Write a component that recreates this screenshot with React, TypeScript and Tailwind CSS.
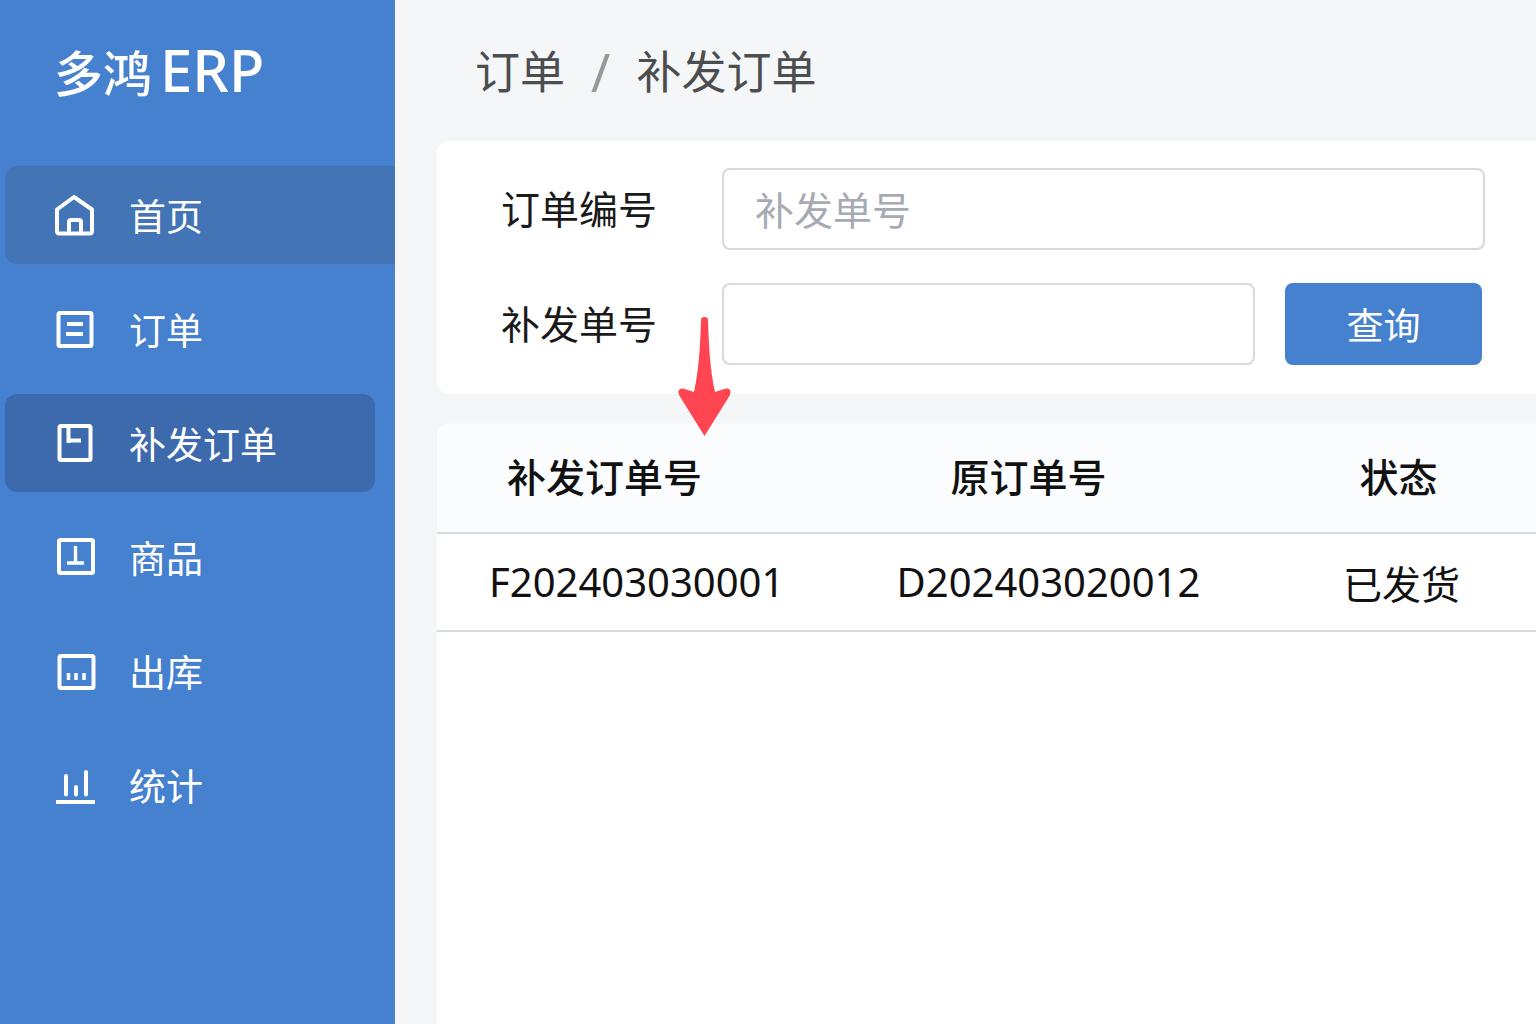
import React, { FC, ReactNode } from "react";

type NavItem = {
  label: string;
  icon: ReactNode;
  state?: "hover" | "active";
};

const Frame: FC<{ children?: ReactNode }> = ({ children }) => (
  <svg
    width="40"
    height="40"
    viewBox="0 0 40 40"
    fill="none"
    stroke="currentColor"
    strokeWidth="4"
    className="overflow-visible"
    aria-hidden="true"
  >
    {children}
  </svg>
);

const navItems: NavItem[] = [
  {
    label: "首页",
    state: "hover",
    icon: (
      <Frame>
        <path
          d="M3 14.500L20 2L38 14.500V36Q38 38.500 35.500 38.500H5.500Q3 38.500 3 36Z"
          strokeLinejoin="round"
        />
        <path d="M15 38V27Q15 25 17 25H25Q27 25 27 27V38" />
      </Frame>
    ),
  },
  {
    label: "订单",
    icon: (
      <Frame>
        <rect x="4.500" y="4" width="33" height="33" rx="1.500" />
        <path d="M13 15H29M12 25H29" />
      </Frame>
    ),
  },
  {
    label: "补发订单",
    state: "active",
    icon: (
      <Frame>
        <rect x="5.500" y="3" width="31" height="34" rx="1.500" />
        <path d="M14.500 3V20M13 17.500H27" />
      </Frame>
    ),
  },
  {
    label: "商品",
    icon: (
      <Frame>
        <rect x="5" y="3" width="34" height="33" rx="1.500" />
        <path d="M21.500 9V26M13 26H30" strokeWidth="3.400" />
      </Frame>
    ),
  },
  {
    label: "出库",
    icon: (
      <Frame>
        <rect x="5.500" y="5" width="34" height="32" rx="1.500" />
        <path d="M14.500 22V29M22 22V29M30 22V29" strokeWidth="3.500" />
      </Frame>
    ),
  },
  {
    label: "统计",
    icon: (
      <Frame>
        <path d="M2 37H41" />
        <path
          d="M12 11V29.500M22 22V29.500M32 7V29.500"
          strokeWidth="4"
          strokeLinecap="round"
        />
      </Frame>
    ),
  },
];

const stateClass = {
  hover: "rounded-l-xl bg-[#4274b6]",
  active: "mr-5 rounded-xl bg-[#3c6aad]",
};

const orders = [
  { reissueNo: "F202403030001", originNo: "D202403020012", status: "已发货" },
];

const Sidebar: FC = () => (
  <aside className="w-[395px] shrink-0 bg-[#4581ce] text-white">
    <div className="h-[166px] pl-[54px] pt-[30px] text-[49px] leading-[80px] font-medium">
      多鸿<span className="ml-2 text-[58px]">ERP</span>
    </div>
    <nav className="flex flex-col gap-4 pl-[5px]">
      {navItems.map((item) => (
        <a
          key={item.label}
          href="#"
          className={`flex h-[98px] items-center gap-[35px] pl-[49px] text-[37px] ${
            item.state ? stateClass[item.state] : ""
          }`}
        >
          {item.icon}
          <span className="pt-1">{item.label}</span>
        </a>
      ))}
    </nav>
  </aside>
);

const SearchForm: FC = () => (
  <form
    className="flex flex-col gap-[33px] rounded-l-xl bg-white pt-[27px] pr-[51px] pb-[29px] pl-16 text-[39px] text-[#1a1a1a]"
    onSubmit={(e) => e.preventDefault()}
  >
    <div className="flex items-center">
      <label htmlFor="orderNo" className="w-[221px] shrink-0">
        订单编号
      </label>
      <input
        id="orderNo"
        type="text"
        placeholder="补发单号"
        className="h-[82px] min-w-0 flex-1 rounded-lg border-2 border-[#d6dadd] bg-white px-[31px] placeholder:text-[#a6abb3]"
      />
    </div>
    <div className="flex items-center pr-[3px]">
      <label htmlFor="reissueNo" className="w-[221px] shrink-0">
        补发单号
      </label>
      <input
        id="reissueNo"
        type="text"
        className="h-[82px] min-w-0 flex-1 rounded-lg border-2 border-[#d6dadd] bg-white px-[31px]"
      />
      <button
        type="submit"
        className="ml-[30px] h-[82px] w-[197px] rounded-lg bg-[#4581ce] pt-1 text-[37px] text-white"
      >
        查询
      </button>
    </div>
  </form>
);

const OrderTable: FC = () => (
  <section className="relative mt-[29px] flex-1 rounded-tl-xl bg-white">
    <table className="w-full table-fixed text-left text-[39px] text-[#111111]">
      <thead>
        <tr className="h-[110px] border-b-2 border-[#d5dade] bg-[#fbfcfe]">
          <th className="w-[40%] rounded-tl-xl pl-[70px] font-medium">补发订单号</th>
          <th className="w-[35%] pl-[74px] font-medium">原订单号</th>
          <th className="w-[25%] text-center font-medium">状态</th>
        </tr>
      </thead>
      <tbody>
        {orders.map((order) => (
          <tr key={order.reissueNo} className="h-[98px] border-b-2 border-[#d5dade]">
            <td className="pl-[52px] text-[40px]">{order.reissueNo}</td>
            <td className="pl-5 text-[40px]">{order.originNo}</td>
            <td className="pt-1 pl-1.5 text-center">{order.status}</td>
          </tr>
        ))}
      </tbody>
    </table>
    {/* pointer to the reissue number column */}
    <svg
      className="absolute -top-[107px] left-[241px]"
      width="53"
      height="120"
      viewBox="0 0 53 120"
      fill="#ff4551"
      aria-hidden="true"
    >
      <path d="M23 4Q23 1 26.500 1Q30 1 30 4C31 35 32.500 55 37 76L48 72.500Q54 72 52 79L26.500 120L1 79Q-1 72 5 72.500L16 76C20.500 55 22 35 23 4Z" />
    </svg>
  </section>
);

const App: FC = () => {
  return (
    <div className="flex min-h-screen bg-[#f4f6f8] font-['Noto_Sans','Noto_Sans_CJK_SC',sans-serif]">
      <Sidebar />
      <main className="flex min-w-0 flex-1 flex-col pl-[42px]">
        <nav className="flex h-[141px] items-center pt-0.5 pl-[38px] text-[45px] text-[#4c4d4f]">
          <a href="#">订单</a>
          <span className="mx-[26px] text-[52px] text-[#96989b]">/</span>
          <a href="#">补发订单</a>
        </nav>
        <SearchForm />
        <OrderTable />
      </main>
    </div>
  );
};

export default App;
